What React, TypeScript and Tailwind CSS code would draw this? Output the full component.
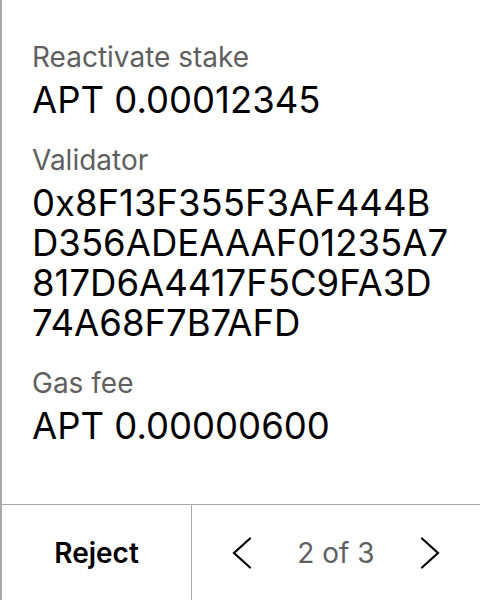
const rows = [
  { label: 'Reactivate stake', lines: ['APT 0.00012345'] },
  {
    label: 'Validator',
    lines: ['0x8F13F355F3AF444B', 'D356ADEAAAF01235A7', '817D6A4417F5C9FA3D', '74A68F7B7AFD'],
  },
  { label: 'Gas fee', lines: ['APT 0.00000600'] },
];

const Chevron = ({ dir }: { dir: 'left' | 'right' }) => (
  <svg width="32" height="32" viewBox="0 0 32 32" fill="none">
    <polyline
      points={dir === 'left' ? '24,1.5 8,16 24,30.5' : '8,1.5 24,16 8,30.5'}
      stroke="#000"
      strokeWidth="2.2"
      strokeLinecap="round"
      strokeLinejoin="miter"
    />
  </svg>
);

export default function App() {
  return (
    <div
      className="flex h-[600px] w-[480px] flex-col border-l-2 border-[#a9a9a9] bg-white"
      style={{ fontFamily: 'Inter, "Noto Sans", sans-serif' }}
    >
      <div className="flex flex-1 flex-col gap-[24px] pl-[30px] pr-[24px] pt-[41px]">
        {rows.map((row) => (
          <div key={row.label} className="flex flex-col gap-[7px]">
            <p className="text-[28px] leading-[32px] text-[#5f5f5f]">{row.label}</p>
            <div className="text-[36.5px] leading-[40px] text-black">
              {row.lines.map((line) => (
                <p key={line}>{line}</p>
              ))}
            </div>
          </div>
        ))}
      </div>
      <div className="flex h-[96px] border-t border-[#a9a9a9]">
        <button className="flex w-[190px] items-center justify-center border-r border-[#a9a9a9] text-[28px] font-semibold text-black">
          Reject
        </button>
        <div className="flex flex-1 items-center justify-between px-[34px]">
          <button className="flex items-center">
            <Chevron dir="left" />
          </button>
          <span className="text-[28px] text-[#5f5f5f]">2 of 3</span>
          <button className="flex items-center">
            <Chevron dir="right" />
          </button>
        </div>
      </div>
    </div>
  );
}
